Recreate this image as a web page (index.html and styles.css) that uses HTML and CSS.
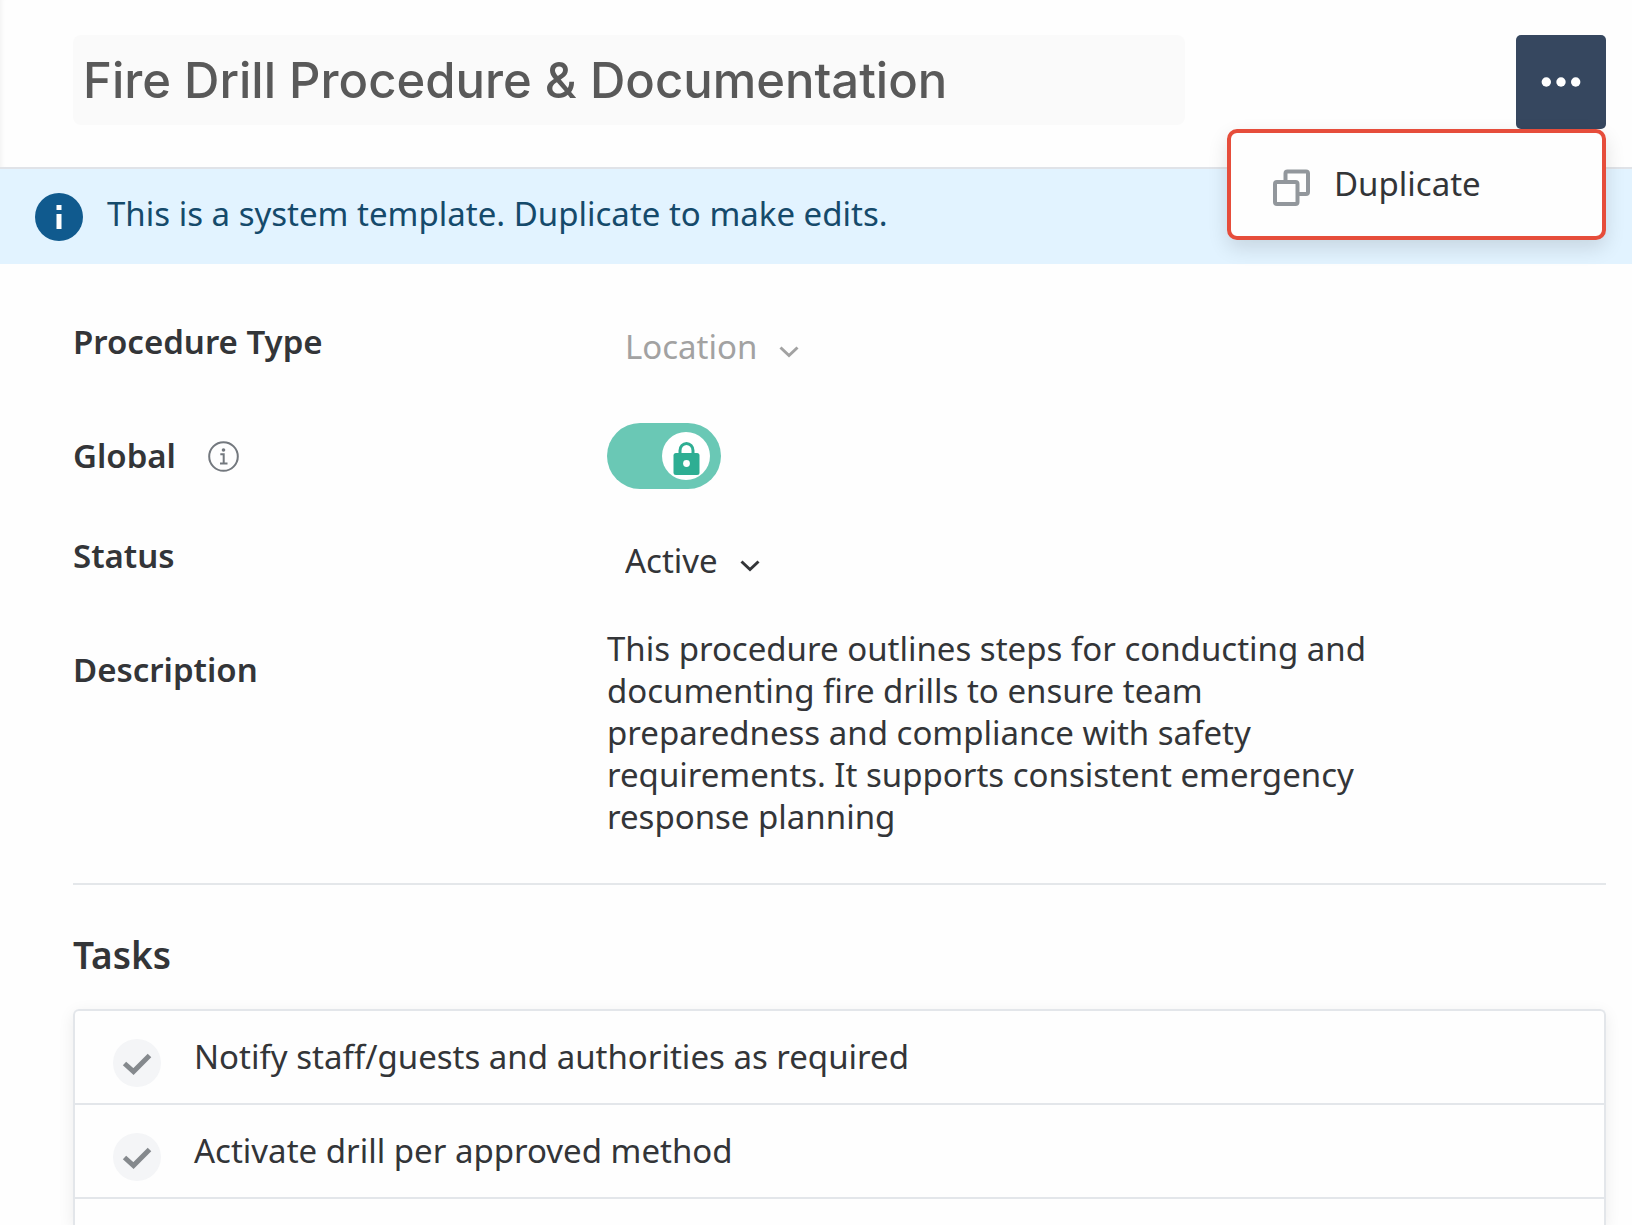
FILE: index.html
```html
<!DOCTYPE html>
<html lang="en">
<head>
<meta charset="utf-8">
<meta name="viewport" content="width=device-width, initial-scale=1">
<title>Fire Drill Procedure &amp; Documentation</title>
<link rel="stylesheet" href="styles.css">
</head>
<body>
<header class="header">
  <input class="title-input" type="text" aria-label="Procedure title" value="Fire Drill Procedure &amp; Documentation" readonly>
  <div class="actions">
    <button class="more-button" type="button" aria-label="More actions" aria-haspopup="menu" aria-expanded="true">
      <svg width="40" height="10" viewBox="0 0 40 10" aria-hidden="true"><circle cx="5.300" cy="5" r="4.700"/><circle cx="20" cy="5" r="4.700"/><circle cx="34.700" cy="5" r="4.700"/></svg>
    </button>
    <div class="menu" role="menu">
      <button class="menu-item" type="button" role="menuitem">
        <svg class="menu-icon" width="37" height="37" viewBox="0 0 37 37" aria-hidden="true"><path d="M12.500 12V4.500a2 2 0 0 1 2-2H33a2 2 0 0 1 2 2v18.500a2 2 0 0 1-2 2h-8.500"/><rect x="2" y="13" width="22.500" height="22" rx="2"/></svg>
        <span>Duplicate</span>
      </button>
    </div>
  </div>
</header>

<div class="banner" role="status">
  <svg class="banner-icon" width="48" height="48" viewBox="0 0 48 48" aria-hidden="true"><circle cx="24" cy="24" r="24" fill="#105a8e"/><path d="M21.500 12h5v5h-5zM21.500 21h5v15h-5z" fill="#fff"/></svg>
  <p class="banner-text">This is a system template. Duplicate to make edits.</p>
</div>

<main class="content">
  <div class="fields">
    <div class="field field-select">
      <label class="label" for="type">Procedure Type</label>
      <div class="select is-disabled">
        <select id="type" disabled><option>Location</option></select>
        <svg width="20" height="13" viewBox="0 0 20 13" aria-hidden="true"><path d="M1.500 2.500 10 10.500 18.500 2.500"/></svg>
      </div>
    </div>
    <div class="field field-toggle">
      <label class="label" for="global">Global
        <svg class="hint" width="31" height="31" viewBox="0 0 31 31" aria-hidden="true"><circle cx="15.500" cy="15.500" r="14.300"/><path d="M12.300 13.300h3.400v9M12 22.500h7.500"/><circle class="hint-dot" cx="15.500" cy="9" r="1.800"/></svg>
      </label>
      <div class="toggle">
        <input id="global" type="checkbox" role="switch" checked disabled>
        <svg class="knob" width="48" height="48" viewBox="0 0 48 48" aria-hidden="true"><circle cx="24" cy="24" r="24" fill="#fff"/><path d="M18 23v-4.500a6.500 7 0 0 1 13 0V23" fill="none" stroke="#2eae93" stroke-width="3"/><rect x="11.500" y="21" width="26" height="22" rx="2.500" fill="#2eae93"/><circle cx="24.500" cy="31.500" r="3.400" fill="#fff"/></svg>
      </div>
    </div>
    <div class="field field-select">
      <label class="label" for="status">Status</label>
      <div class="select">
        <select id="status"><option>Active</option></select>
        <svg width="20" height="13" viewBox="0 0 20 13" aria-hidden="true"><path d="M1.500 2.500 10 10.500 18.500 2.500"/></svg>
      </div>
    </div>
    <div class="field field-text">
      <span class="label">Description</span>
      <p class="description">This procedure outlines steps for conducting and documenting fire drills to ensure team preparedness and compliance with safety requirements. It supports consistent emergency response planning</p>
    </div>
  </div>

  <h2 class="section-title">Tasks</h2>
  <ul class="tasks">
    <li class="task">
      <svg class="task-icon" width="48" height="48" viewBox="0 0 48 48" aria-hidden="true"><circle cx="24" cy="24" r="24"/><path d="M11.500 24.500 20.500 32.500 36.500 16.500"/></svg>
      <span>Notify staff/guests and authorities as required</span>
    </li>
    <li class="task">
      <svg class="task-icon" width="48" height="48" viewBox="0 0 48 48" aria-hidden="true"><circle cx="24" cy="24" r="24"/><path d="M11.500 24.500 20.500 32.500 36.500 16.500"/></svg>
      <span>Activate drill per approved method</span>
    </li>
  </ul>
</main>
</body>
</html>
```

FILE: styles.css
```css
* {
  box-sizing: border-box;
}

body {
  display: flex;
  flex-direction: column;
  min-height: 100vh;
  margin: 0;
  background: #fefefe;
  color: #333538;
  font: 400 33px/42px "Noto Sans", "Open Sans", sans-serif;
}

p,
h2,
ul {
  margin: 0;
  padding: 0;
}

button,
input,
select {
  margin: 0;
  padding: 0;
  border: 0;
  background: none;
  color: inherit;
  font: inherit;
}

/* Header */
.header {
  display: flex;
  justify-content: space-between;
  align-items: flex-start;
  padding: 35px 26px 38px 73px;
  border-bottom: 2px solid #e0e3e8;
  box-shadow: inset 6px 0 6px -6px rgba(0, 0, 0, 0.08);
}

.title-input {
  flex: 0 1 1112px;
  min-width: 0;
  height: 90px;
  padding: 0 10px;
  border-radius: 8px;
  background: #fafafa;
  color: #595959;
  font: 500 49px/60px Inter, sans-serif;
}

.actions {
  position: relative;
}

.more-button {
  display: flex;
  justify-content: center;
  align-items: center;
  width: 90px;
  height: 94px;
  border-radius: 5px;
  background: #36475f;
  fill: #fff;
}

.menu {
  position: absolute;
  top: 100%;
  right: 0;
  z-index: 1;
  width: 379px;
  border: 4px solid #e64d3b;
  border-radius: 10px;
  background: #fefefe;
  box-shadow: 0 8px 20px rgba(0, 0, 0, 0.12);
}

.menu-item {
  display: flex;
  gap: 24px;
  width: 100%;
  padding: 30px 42px;
}

.menu-icon {
  margin-top: 6px;
  fill: none;
  stroke: #92979c;
  stroke-width: 4;
}

/* Banner */
.banner {
  display: flex;
  align-items: center;
  gap: 24px;
  min-height: 95px;
  padding: 0 35px;
  background: #e2f3ff;
  color: #154a6b;
}

.banner-icon {
  flex: none;
}

.banner-text {
  padding-bottom: 5px;
}

/* Fields */
.content {
  display: flex;
  flex: 1;
  flex-direction: column;
  padding: 57px 26px 0 73px;
}

.fields {
  display: flex;
  flex-direction: column;
  gap: 46px;
  padding-bottom: 45px;
  border-bottom: 2px solid #e4e7ea;
}

.field {
  display: grid;
  grid-template-columns: minmax(auto, 534px) minmax(50%, 1fr);
}

.label {
  font-weight: 600;
}

.field-select .select {
  padding: 5px 0 0 18px;
}

.field-toggle {
  align-items: center;
  margin-top: 9px;
}

.field-toggle .label {
  display: flex;
  align-items: center;
  gap: 32px;
}

.field-text .label {
  padding-top: 21px;
}

.hint {
  fill: none;
  stroke: #73787e;
  stroke-width: 2;
}

.hint-dot {
  fill: #73787e;
  stroke: none;
}

.select {
  display: flex;
  align-items: center;
  gap: 22px;
}

.select select {
  appearance: none;
  field-sizing: content;
  height: 42px;
  opacity: 1;
}

.select svg {
  margin-top: 8px;
  fill: none;
  stroke: currentColor;
  stroke-width: 3;
}

.is-disabled {
  color: #a2a2a2;
}

.toggle {
  position: relative;
  width: 114px;
  height: 66px;
}

.toggle input {
  display: block;
  width: 100%;
  height: 100%;
  border-radius: 33px;
  appearance: none;
  background: #6ac8b5;
}

.knob {
  position: absolute;
  top: 9px;
  right: 11px;
}

.description {
  max-width: 780px;
}

/* Tasks */
.section-title {
  padding: 46px 0 30px;
  font-size: 37px;
  font-weight: 600;
  line-height: 48px;
}

.tasks {
  flex: 1;
  border: 2px solid #e3e6ea;
  border-bottom: 0;
  border-radius: 6px 6px 0 0;
  box-shadow: 0 4px 16px rgba(0, 0, 0, 0.08);
  list-style: none;
}

.task {
  display: flex;
  align-items: flex-start;
  gap: 33px;
  padding: 25px 38px;
  border-bottom: 2px solid #e3e6ea;
}

.task-icon {
  flex: none;
  height: 48px;
  margin: 3px 0 -9px;
}

.task-icon circle {
  fill: #f4f5f7;
}

.task-icon path {
  fill: none;
  stroke: #85898d;
  stroke-width: 5;
}
```
